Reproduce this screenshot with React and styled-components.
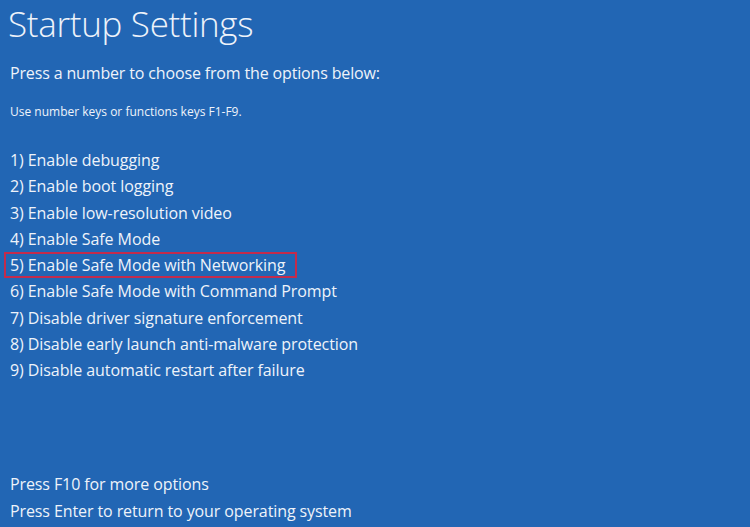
import React from 'react'
import styled, { createGlobalStyle } from 'styled-components'

const GlobalStyle = createGlobalStyle`
    html, body {
        margin: 0;
        padding: 0;
        background: #2266b4;
    }
    * {
        box-sizing: border-box;
    }
`

const options = [
    'Enable debugging',
    'Enable boot logging',
    'Enable low-resolution video',
    'Enable Safe Mode',
    'Enable Safe Mode with Networking',
    'Enable Safe Mode with Command Prompt',
    'Disable driver signature enforcement',
    'Disable early launch anti-malware protection',
    'Disable automatic restart after failure',
]

function App() {
    return (
        <Screen>
            <GlobalStyle />
            <Title>Startup Settings</Title>
            <Prompt>Press a number to choose from the options below:</Prompt>
            <Hint>Use number keys or functions keys F1-F9.</Hint>

            <OptionList>
                {options.map((label, i) => (
                    <Option key={label} selected={i === 4}>
                        {i + 1}) {label}
                    </Option>
                ))}
            </OptionList>

            <Footer>
                <Line>Press F10 for more options</Line>
                <Line>Press Enter to return to your operating system</Line>
            </Footer>
        </Screen>
    )
}

export default App

const Screen = styled.div`
    width: 750px;
    height: 527px;
    overflow: hidden;
    background: #2266b4;
    color: #eef3fa;
    font-family: "Open Sans", "Noto Sans", sans-serif;
    display: flex;
    flex-direction: column;
    padding: 0 0 0 10px;
`

const Title = styled.h1`
    margin: 2px 0 0 -2px;
    font-size: 35px;
    font-weight: 300;
    line-height: 44px;
    letter-spacing: -0.3px;
`

const Prompt = styled.div`
    margin-top: 16px;
    font-size: 16px;
    font-weight: 400;
    line-height: 22px;
    letter-spacing: -0.15px;
`

const Hint = styled.div`
    margin-top: 20px;
    font-size: 12px;
    line-height: 16px;
`

const Option = styled.div`
    font-size: 16px;
    line-height: 26.3px;
    letter-spacing: -0.08px;
    margin-left: ${props => props.selected ? '-6px' : '0'};
    padding-left: ${props => props.selected ? '4px' : '0'};
    width: ${props => props.selected ? '293px' : 'auto'};
    border: ${props => props.selected ? '2px solid #c42b4c' : 'none'};
    height: 26.3px;
    display: flex;
    align-items: center;
`

const OptionList = styled.div`
    margin-top: 27px;
    display: flex;
    flex-direction: column;
`

const Footer = styled.div`
    margin-top: auto;
    margin-bottom: 3px;
    display: flex;
    flex-direction: column;
`

const Line = styled.div`
    font-size: 16px;
    line-height: 26.5px;
    letter-spacing: -0.1px;
`
